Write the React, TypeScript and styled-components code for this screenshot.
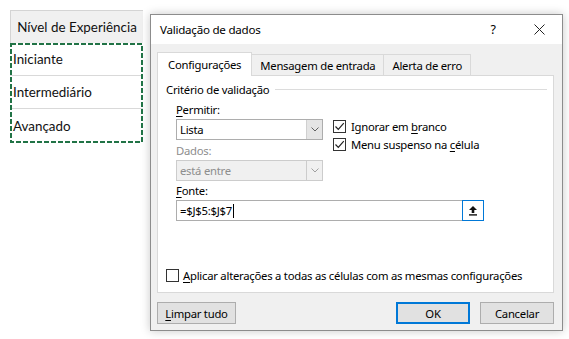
import React, {FC, ReactNode} from 'react'
import styled, {createGlobalStyle} from 'styled-components'

const Global = createGlobalStyle`
  body {
    margin: 0;
    background: #fff;
    font-family: "Noto Sans", "Open Sans", sans-serif;
  }
`

const Page = styled.div`
  display: flex;
  align-items: flex-start;
  padding: 10px 0 0 10px;
  width: 569px;
  height: 339px;
  box-sizing: border-box;
`

/* ---------- spreadsheet ---------- */

const Sheet = styled.div`
  width: 133px;
  font-family: Lato, "Noto Sans", sans-serif;
  font-size: 13.4px;
  color: #111;
`

const HeaderCell = styled.div`
  height: 33px;
  box-sizing: border-box;
  border-top: 1px solid #d4d4d4;
  border-left: 1px solid #d4d4d4;
  background: #f0f0f0;
  display: flex;
  align-items: center;
  justify-content: center;
  white-space: nowrap;
`

const Cells = styled.div`
  position: relative;
`

const Cell = styled.div<{$last?: boolean}>`
  height: 33px;
  box-sizing: border-box;
  padding-left: 3px;
  display: flex;
  align-items: center;
  border-bottom: ${p => (p.$last ? 'none' : '1px solid #d9d9d9')};
`

const Ants = styled.svg`
  position: absolute;
  left: 0;
  top: 0;
  width: 133px;
  height: 100px;
  overflow: visible;
`

/* ---------- dialog ---------- */

const Dialog = styled.div`
  margin: 4px 0 0 7px;
  width: 413px;
  height: 317px;
  box-sizing: border-box;
  border: 1px solid #8c8c8c;
  background: #f0f0f0;
  box-shadow: 0 0 9px rgba(0, 0, 0, 0.22);
  display: flex;
  flex-direction: column;
  font-size: 11.3px;
  letter-spacing: -0.25px;
  color: #000;
`

const TitleBar = styled.div`
  height: 29px;
  background: #fff;
  display: flex;
  align-items: center;
  padding-left: 9px;
`

const Title = styled.span`
  flex: 1;
  font-size: 11.6px;
`

const TitleBtn = styled.span`
  width: 46px;
  display: flex;
  justify-content: center;
  align-items: center;
  font-size: 12.5px;
`

const Body = styled.div`
  flex: 1;
  display: flex;
  flex-direction: column;
  padding: 7px 8px 0 6px;
`

const Tabs = styled.div`
  display: flex;
  align-items: flex-end;
  height: 24px;
`

const Tab = styled.div<{$active?: boolean}>`
  height: ${p => (p.$active ? '24px' : '21px')};
  box-sizing: border-box;
  padding: 0 ${p => (p.$active ? '10px' : '8px')};
  display: flex;
  align-items: center;
  border: 1px solid #d9d9d9;
  border-bottom: none;
  margin-left: ${p => (p.$active ? '0' : '-1px')};
  background: ${p => (p.$active ? '#fff' : '#f0f0f0')};
  position: relative;
  z-index: ${p => (p.$active ? 1 : 0)};
  margin-bottom: ${p => (p.$active ? '-1px' : '0')};
`

const Panel = styled.div`
  height: 218px;
  box-sizing: border-box;
  border: 1px solid #d9d9d9;
  background: #fff;
  display: flex;
  flex-direction: column;
  padding: 5px 0 8px 8px;
`

const Legend = styled.div`
  display: flex;
  align-items: center;
  height: 16px;
  &::after {
    content: '';
    flex: 1;
    height: 1px;
    background: #dcdcdc;
    margin: 1px 6px 0 6px;
  }
`

const Criteria = styled.div`
  display: flex;
  padding-left: 10px;
  margin-top: 5px;
`

const LeftCol = styled.div`
  display: flex;
  flex-direction: column;
  width: 147px;
`

const RightCol = styled.div`
  display: flex;
  flex-direction: column;
  padding: 15px 0 0 10px;
`

const Label = styled.div<{$disabled?: boolean; $gap?: number; $indent?: number}>`
  height: 16px;
  line-height: 16px;
  margin-top: ${p => p.$gap ?? 0}px;
  margin-left: ${p => p.$indent ?? 0}px;
  margin-bottom: 1px;
  color: ${p => (p.$disabled ? '#8d8d8d' : '#000')};
`

const Select = styled.div<{$disabled?: boolean}>`
  height: 21px;
  box-sizing: border-box;
  border: 1px solid ${p => (p.$disabled ? '#cccccc' : '#adadad')};
  background: ${p => (p.$disabled ? '#f0f0f0' : '#fff')};
  color: ${p => (p.$disabled ? '#8d8d8d' : '#000')};
  display: flex;
  align-items: center;
  padding-left: 3px;
`

const SelectText = styled.span`
  flex: 1;
`

const DropBtn = styled.span<{$disabled?: boolean}>`
  width: 16px;
  height: 19px;
  box-sizing: border-box;
  background: ${p => (p.$disabled ? '#f0f0f0' : '#e5e5e5')};
  border-left: 1px solid ${p => (p.$disabled ? '#cccccc' : '#d0d0d0')};
  display: flex;
  align-items: center;
  justify-content: center;
`

const CheckRow = styled.label`
  display: flex;
  align-items: center;
  height: 18px;
  gap: 5px;
  white-space: nowrap;
`

const Box = styled.span`
  width: 13px;
  height: 13px;
  flex: none;
  box-sizing: border-box;
  border: 1px solid #333;
  background: #fff;
  display: flex;
  align-items: center;
  justify-content: center;
`

const SourceRow = styled.div`
  display: flex;
  margin-left: 10px;
  width: 308px;
  height: 21px;
`

const SourceInput = styled.div`
  flex: 1;
  box-sizing: border-box;
  border: 1px solid #adadad;
  border-right: none;
  display: flex;
  align-items: center;
  padding-left: 3px;
`

const Caret = styled.span`
  display: inline-block;
  width: 1px;
  height: 14px;
  background: #000;
  margin-left: 1px;
`

const CollapseBtn = styled.span`
  width: 22px;
  box-sizing: border-box;
  border: 1px solid #0078d7;
  background: #fff;
  display: flex;
  align-items: center;
  justify-content: center;
`

const ApplyRow = styled(CheckRow)`
  margin-top: auto;
  gap: 4px;
`

const Footer = styled.div`
  display: flex;
  align-items: center;
  margin-top: 9px;
`

const Button = styled.div<{$default?: boolean; $push?: boolean; $w?: number}>`
  width: ${p => p.$w ?? 79}px;
  height: 22px;
  box-sizing: border-box;
  border: ${p => (p.$default ? '2px solid #0078d7' : '1px solid #adadad')};
  background: #e1e1e1;
  display: flex;
  align-items: center;
  justify-content: center;
  margin-left: ${p => (p.$push ? 'auto' : '10px')};
  &:first-child {
    margin-left: 0;
  }
`

const Key = styled.span`
  text-decoration: underline;
  text-underline-offset: 2px;
`

const Chevron: FC<{color?: string}> = ({color = '#606060'}) => (
  <svg width="8" height="5" viewBox="0 0 8 5">
    <path d="M0.5 0.5 L4 4 L7.5 0.5" fill="none" stroke={color} strokeWidth="1"/>
  </svg>
)

const Tick: FC = () => (
  <svg width="11" height="11" viewBox="0 0 11 11">
    <path d="M1.5 5.5 L4.3 8.3 L9.8 2.2" fill="none" stroke="#222" strokeWidth="1.2"/>
  </svg>
)

const CloseIcon: FC = () => (
  <svg width="11" height="11" viewBox="0 0 11 11">
    <path d="M0.5 0.5 L10.5 10.5 M10.5 0.5 L0.5 10.5" stroke="#222" strokeWidth="1"/>
  </svg>
)

const CollapseIcon: FC = () => (
  <svg width="10" height="11" viewBox="0 0 10 11">
    <path d="M5 1 L9 5 H6.3 V8 H3.7 V5 H1 Z" fill="#111"/>
    <rect x="1" y="9.2" width="8" height="1.4" fill="#111"/>
  </svg>
)

const Check: FC<{checked?: boolean; children: ReactNode}> = ({checked, children}) => (
  <CheckRow>
    <Box>{checked && <Tick/>}</Box>
    <span>{children}</span>
  </CheckRow>
)

const rows = ['Iniciante', 'Intermediário', 'Avançado']

const App: FC = () => (
  <Page>
    <Global/>
    <Sheet>
      <HeaderCell>Nível de Experiência</HeaderCell>
      <Cells>
        {rows.map((r, i) => (
          <Cell key={r} $last={i === rows.length - 1}>{r}</Cell>
        ))}
        <Ants viewBox="0 0 133 100">
          <rect x="1" y="1" width="131" height="98" fill="none" stroke="#217346"
            strokeWidth="2" strokeDasharray="5 2"/>
        </Ants>
      </Cells>
    </Sheet>

    <Dialog>
      <TitleBar>
        <Title>Validação de dados</Title>
        <TitleBtn>?</TitleBtn>
        <TitleBtn><CloseIcon/></TitleBtn>
      </TitleBar>
      <Body>
        <Tabs>
          <Tab $active>Configurações</Tab>
          <Tab>Mensagem de entrada</Tab>
          <Tab>Alerta de erro</Tab>
        </Tabs>
        <Panel>
          <Legend>Critério de validação</Legend>
          <Criteria>
            <LeftCol>
              <Label><Key>P</Key>ermitir:</Label>
              <Select>
                <SelectText>Lista</SelectText>
                <DropBtn><Chevron/></DropBtn>
              </Select>
              <Label $disabled $gap={3}>Dados:</Label>
              <Select $disabled>
                <SelectText>está entre</SelectText>
                <DropBtn $disabled><Chevron color="#a0a0a0"/></DropBtn>
              </Select>
            </LeftCol>
            <RightCol>
              <Check checked>Ignorar em <Key>b</Key>ranco</Check>
              <Check checked>Menu suspenso na <Key>c</Key>élula</Check>
            </RightCol>
          </Criteria>
          <Label $indent={10} $gap={2}><Key>F</Key>onte:</Label>
          <SourceRow>
            <SourceInput>=$J$5:$J$7<Caret/></SourceInput>
            <CollapseBtn><CollapseIcon/></CollapseBtn>
          </SourceRow>
          <ApplyRow>
            <Box/>
            <span><Key>A</Key>plicar alterações a todas as células com as mesmas configurações</span>
          </ApplyRow>
        </Panel>
        <Footer>
          <Button><Key>L</Key>impar tudo</Button>
          <Button $default $push $w={74}>OK</Button>
          <Button $w={74}>Cancelar</Button>
        </Footer>
      </Body>
    </Dialog>
  </Page>
)

export default App
